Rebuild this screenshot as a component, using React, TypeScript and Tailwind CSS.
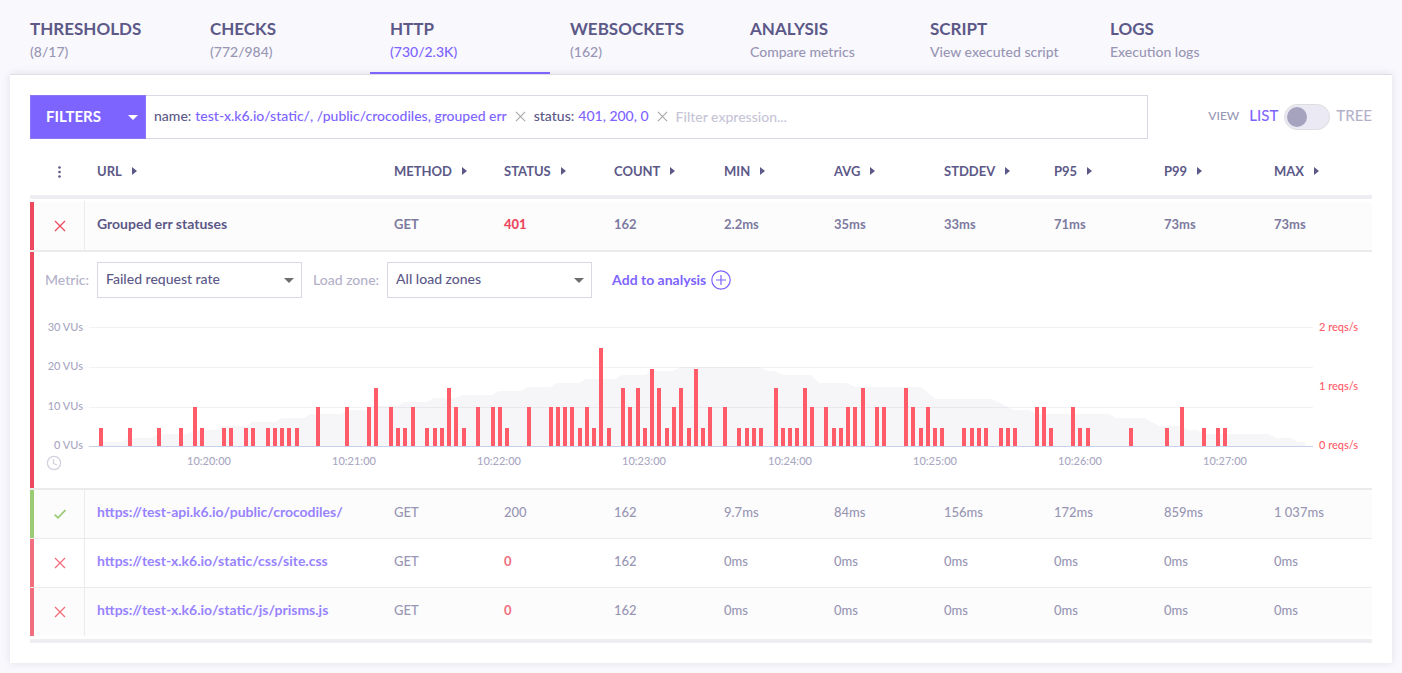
import { useState } from "react";

const TABS = [
  { title: "THRESHOLDS", sub: "(8/17)" },
  { title: "CHECKS", sub: "(772/984)" },
  { title: "HTTP", sub: "(730/2.3K)" },
  { title: "WEBSOCKETS", sub: "(162)" },
  { title: "ANALYSIS", sub: "Compare metrics" },
  { title: "SCRIPT", sub: "View executed script" },
  { title: "LOGS", sub: "Execution logs" },
];

const COLUMNS = ["METHOD", "STATUS", "COUNT", "MIN", "AVG", "STDDEV", "P95", "P99", "MAX"];

type Row = { url: string; ok: boolean; cells: string[] };

const GROUP: Row = {
  url: "Grouped err statuses",
  ok: false,
  cells: ["GET", "401", "162", "2.2ms", "35ms", "33ms", "71ms", "73ms", "73ms"],
};

const ROWS: Row[] = [
  {
    url: "https://test-api.k6.io/public/crocodiles/",
    ok: true,
    cells: ["GET", "200", "162", "9.7ms", "84ms", "156ms", "172ms", "859ms", "1 037ms"],
  },
  {
    url: "https://test-x.k6.io/static/css/site.css",
    ok: false,
    cells: ["GET", "0", "162", "0ms", "0ms", "0ms", "0ms", "0ms", "0ms"],
  },
  {
    url: "https://test-x.k6.io/static/js/prisms.js",
    ok: false,
    cells: ["GET", "0", "162", "0ms", "0ms", "0ms", "0ms", "0ms", "0ms"],
  },
];

// Request bars: [x, level]; the level indexes BAR_HEIGHTS.
const BAR_HEIGHTS = [0, 18, 39, 58, 77, 98];
const BARS: [number, number][] = [
  [65, 1], [94, 1], [123, 1], [145, 1], [159, 2], [166, 1], [188, 1], [195, 1], [210, 1], [217, 1],
  [232, 1], [239, 1], [246, 1], [253, 1], [261, 1], [282, 2], [311, 2], [333, 2], [340, 3], [355, 2],
  [362, 1], [369, 1], [377, 2], [391, 1], [399, 1], [406, 1], [413, 3], [420, 2], [428, 1], [442, 2],
  [457, 2], [464, 2], [471, 1], [493, 2], [515, 2], [522, 2], [529, 2], [536, 2], [544, 1], [551, 2],
  [558, 1], [565, 5], [573, 1], [587, 3], [594, 2], [602, 3], [609, 1], [616, 4], [623, 3], [631, 1],
  [638, 2], [645, 3], [653, 1], [660, 4], [667, 1], [674, 2], [689, 2], [703, 1], [711, 1], [718, 1],
  [725, 1], [740, 3], [747, 1], [754, 1], [761, 1], [769, 3], [776, 2], [790, 2], [798, 1], [805, 1],
  [812, 2], [819, 2], [827, 3], [841, 2], [848, 2], [870, 3], [877, 2], [885, 1], [892, 2], [899, 1],
  [906, 1], [928, 1], [936, 1], [943, 1], [950, 1], [965, 1], [972, 1], [979, 1], [1001, 2], [1008, 2],
  [1015, 1], [1037, 2], [1044, 1], [1052, 1], [1095, 1], [1131, 1], [1146, 2], [1168, 1], [1182, 1],
  [1189, 1],
];

// Active VUs over time.
const VUS =
  "61,136 67,132 88,132 95,128 117,128 124,124 153,124 160,120 183,120 189,116 212,116 218,112 241,112 248,108 270,108 277,104 307,104 314,100 334,100 341,96 363,96 370,92 392,92 400,88 422,88 429,85 458,85 465,81 487,81 494,77 516,77 523,73 545,73 552,69 581,69 588,65 611,65 618,61 639,61 647,57 726,57 734,61 741,61 749,65 777,65 785,73 813,73 821,77 887,77 901,89 958,89 980,100 995,100 1002,104 1075,104 1082,108 1111,108 1125,116 1147,116 1154,120 1163,120 1170,124 1235,124 1242,128 1257,128 1264,132 1271,132 1271,136";

const TIMES = ["10:20:00", "10:21:00", "10:22:00", "10:23:00", "10:24:00", "10:25:00", "10:26:00", "10:27:00"];

function Cross({ className }: { className: string }) {
  return (
    <svg viewBox="0 0 12 12" className={className} fill="none" stroke="currentColor" strokeWidth="1.3" aria-hidden="true">
      <path d="M1 1l10 10M11 1L1 11" />
    </svg>
  );
}

function Check() {
  return (
    <svg viewBox="0 0 12 12" className="h-3 w-3" fill="none" stroke="currentColor" strokeWidth="1.8" aria-hidden="true">
      <path d="M.7 6.6L4 9.8 11.4 2" />
    </svg>
  );
}

function SortArrow() {
  return (
    <svg viewBox="0 0 5 8" className="h-2 w-[5px]" fill="currentColor" aria-hidden="true">
      <path d="M0 0l5 4-5 4z" />
    </svg>
  );
}

function Caret({ className }: { className: string }) {
  return (
    <svg viewBox="0 0 10 5" className={className} fill="currentColor" aria-hidden="true">
      <path d="M0 0h10L5 5z" />
    </svg>
  );
}

function Dropdown({ id, label, value }: { id: string; label: string; value: string }) {
  return (
    <div className="flex items-center gap-2">
      <label htmlFor={id} className="text-sm font-medium text-[#b3b1c9]">
        {label}
      </label>
      <div className="relative">
        <select
          id={id}
          className="h-9 w-[205px] appearance-none border border-[#d9d8e5] bg-white pr-8 pb-0.5 pl-2 text-sm font-medium text-[#5c5988]"
        >
          <option>{value}</option>
        </select>
        <Caret className="pointer-events-none absolute top-4 right-2 h-[5px] w-[10px] text-[#6e6e6e]" />
      </div>
    </div>
  );
}

function FilterTag({ name, value }: { name: string; value: string }) {
  return (
    <span className="flex shrink-0 items-center">
      <span className="text-[#5c5988]">{name}:</span>
      <span className="ml-1 text-[#7d64ff]">{value}</span>
      <button type="button" aria-label={`Remove ${name} filter`} className="ml-2 text-[#a9a9a9]">
        <Cross className="h-[11px] w-[11px]" />
      </button>
    </span>
  );
}

function Chart() {
  return (
    <svg viewBox="0 0 1338 178" className="block w-full" role="img" aria-label="Failed request rate and virtual users">
      <g shapeRendering="crispEdges">
        {[17, 57, 97].map((y) => (
          <rect key={y} x="55" y={y} width="1224" height="1" fill="#f2f2f4" />
        ))}
      </g>
      <polygon points={VUS} fill="#5c5988" fillOpacity="0.055" />
      <g shapeRendering="crispEdges">
        <rect x="55" y="136" width="1224" height="1" fill="#c6d2ec" />
        {BARS.map(([x, level]) => (
          <rect key={x} x={x} y={136 - BAR_HEIGHTS[level]} width="4" height={BAR_HEIGHTS[level]} fill="#ff5b68" />
        ))}
      </g>
      <g fontSize="11" fontWeight="500" fill="#a9a7c2">
        <g textAnchor="end">
          <text x="49" y="21">30 VUs</text>
          <text x="49" y="60">20 VUs</text>
          <text x="49" y="100">10 VUs</text>
          <text x="49" y="139">0 VUs</text>
        </g>
        <g textAnchor="middle">
          {TIMES.map((t, i) => (
            <text key={t} x={175 + Math.round(i * 145.15)} y="155">
              {t}
            </text>
          ))}
        </g>
        <g fill="#ff5b68">
          <text x="1285" y="21">2 reqs/s</text>
          <text x="1285" y="80">1 reqs/s</text>
          <text x="1285" y="139">0 reqs/s</text>
        </g>
      </g>
      <g fill="none" stroke="#d2d1df" strokeWidth="1.3">
        <circle cx="20" cy="153" r="6.6" />
        <path d="M19.5 149v4.5l3.5 1.5" />
      </g>
    </svg>
  );
}

function DataRow({ row, group = false, last = false, striped = false }: {
  row: Row;
  group?: boolean;
  last?: boolean;
  striped?: boolean;
}) {
  const edge = group
    ? "h-[53px] border-t-[3px] border-t-white border-b-2 border-b-[#ebebeb]"
    : last
      ? "h-12"
      : "h-[49px] border-b border-b-[#ebebeb]";
  const bar = row.ok ? "bg-[#9bcb75]" : group ? "bg-[#eb4a5f]" : "bg-[#f06e7d]";
  const mark = row.ok ? "text-[#9bcb75]" : group ? "text-[#eb4a5f]" : "text-[#f06e7d]";
  return (
    <tr className={striped ? "bg-[#fcfcfc]" : "bg-white"}>
      <td className={`${edge} ${bar} p-0`} />
      <td className={`${edge} border-r border-r-[#ebebeb] p-0 pl-0.5`}>
        <span className={`flex justify-center ${mark}`}>{row.ok ? <Check /> : <Cross className="h-3 w-3" />}</span>
      </td>
      <td className={`${edge} truncate p-0 pb-1 pl-3 text-sm font-bold`}>
        {group ? (
          <span className="text-[#5c5988]">{row.url}</span>
        ) : (
          <a href={row.url} className="text-[#9883ff]">
            {row.url}
          </a>
        )}
      </td>
      {row.cells.map((c, i) => (
        <td
          key={COLUMNS[i]}
          className={`${edge} p-0 pb-1 pl-3 ${
            i === 1 && !row.ok
              ? group ? "font-black text-[#eb4a5f]" : "font-bold text-[#f06e7d]"
              : group ? "font-bold text-[#7d7aa0]" : "font-medium text-[#9896b4]"
          }`}
        >
          {c}
        </td>
      ))}
    </tr>
  );
}

export default function App() {
  const [active, setActive] = useState("HTTP");
  const [tree, setTree] = useState(false);
  return (
    <div className="min-h-screen bg-[#f9f8fd] px-[10px] pb-[10px] font-['Lato',sans-serif] text-[#5c5988]">
      <nav className="flex h-[74px]">
        {TABS.map((t) => (
          <button
            key={t.title}
            type="button"
            onClick={() => setActive(t.title)}
            className={`flex w-[180px] flex-col items-start border-b-2 px-5 pt-[17px] text-left ${
              active === t.title ? "border-[#7d64ff]" : "border-transparent"
            }`}
          >
            <span className="text-[17px] leading-6 font-bold">{t.title}</span>
            <span
              className={`mt-px text-sm leading-5 font-medium whitespace-nowrap ${
                active === t.title ? "text-[#7d64ff]" : "text-[#9896b4]"
              }`}
            >
              {t.sub}
            </span>
          </button>
        ))}
      </nav>

      <main className="border-t border-[#dddde6] bg-white p-5 shadow-[0_0_8px_rgba(60,60,100,0.12)]">
        <div className="flex items-center justify-between gap-[60px]">
          <div className="flex h-11 grow border border-[#d9d8e5]">
            <button
              type="button"
              className="-my-px -ml-px flex w-[116px] items-center justify-between border border-[#8b76f5] bg-[#7d64ff] pr-[7px] pl-[15px] text-[15px] font-bold text-white"
            >
              <span className="pb-0.5">FILTERS</span>
              <Caret className="h-[5px] w-[10px]" />
            </button>
            <div className="flex grow items-center gap-2 pb-0.5 pl-2 text-sm font-medium">
              <FilterTag name="name" value="test-x.k6.io/static/, /public/crocodiles, grouped err" />
              <FilterTag name="status" value="401, 200, 0" />
              <input
                aria-label="Filter expression"
                placeholder="Filter expression..."
                className="h-8 w-0 grow bg-transparent outline-none placeholder:text-[#c6c5d6]"
              />
            </div>
          </div>
          <div className="flex items-center text-[15px] font-medium">
            <span className="mr-[10px] pb-0.5 text-xs text-[#9896b4]">VIEW</span>
            <label htmlFor="tree" className="flex items-center gap-[6px]">
              <span className={`pb-1 ${tree ? "text-[#b3b1c9]" : "text-[#7d64ff]"}`}>LIST</span>
              <input
                id="tree"
                type="checkbox"
                role="switch"
                checked={tree}
                onChange={(e) => setTree(e.target.checked)}
                className="flex h-[26px] w-[46px] appearance-none items-center rounded-full border border-[#dededf] bg-[#ebe9f3] px-[2px] before:h-5 before:w-5 before:rounded-full before:bg-[#a5a3be] checked:justify-end"
              />
              <span className={`pb-1 ${tree ? "text-[#7d64ff]" : "text-[#b3b1c9]"}`}>TREE</span>
            </label>
          </div>
        </div>

        <div className="border-b-4 border-[#ededf2] pb-[3px]">
          <table className="w-full table-fixed border-separate border-spacing-0 text-left text-[13px] leading-5">
            <colgroup>
              <col className="w-1" />
              <col className="w-[51px]" />
              <col />
              {COLUMNS.map((c) => (
                <col key={c} className="w-[110px]" />
              ))}
            </colgroup>
            <thead>
              <tr>
                <th colSpan={2} className="h-[60px] border-b-4 border-[#ededf2] p-0 pl-[3px]">
                  <button type="button" aria-label="Table options" className="mx-auto mt-[10px] block">
                    <svg viewBox="0 0 3 12" className="h-3 w-[3px]" fill="currentColor" aria-hidden="true">
                      <circle cx="1.5" cy="1.5" r="1.3" />
                      <circle cx="1.5" cy="6" r="1.3" />
                      <circle cx="1.5" cy="10.5" r="1.3" />
                    </svg>
                  </button>
                </th>
                {["URL", ...COLUMNS].map((c) => (
                  <th key={c} className="border-b-4 border-[#ededf2] p-0 pl-3">
                    <button type="button" className="mt-2 flex items-center gap-[10px] font-bold">
                      {c}
                      <SortArrow />
                    </button>
                  </th>
                ))}
              </tr>
            </thead>
            <tbody>
              <DataRow row={GROUP} group striped />
              <tr>
                <td className="border-b-2 border-b-[#ebebeb] bg-[#eb4a5f] p-0" />
                <td colSpan={11} className="border-b-2 border-b-[#ebebeb] p-0 pt-[10px]">
                  <div className="mb-3 flex items-center gap-[11px] pl-[11px]">
                    <Dropdown id="metric" label="Metric:" value="Failed request rate" />
                    <Dropdown id="zone" label="Load zone:" value="All load zones" />
                    <button type="button" className="ml-[9px] flex items-center gap-[5px] text-sm font-bold text-[#7d64ff]">
                      Add to analysis
                      <svg viewBox="0 0 20 20" className="h-5 w-5" fill="none" stroke="currentColor" strokeWidth="1.2" aria-hidden="true">
                        <circle cx="10" cy="10" r="9.2" />
                        <path d="M10 5v10M5 10h10" />
                      </svg>
                    </button>
                  </div>
                  <Chart />
                </td>
              </tr>
              {ROWS.map((r, i) => (
                <DataRow key={r.url} row={r} striped={i % 2 === 0} last={i === ROWS.length - 1} />
              ))}
            </tbody>
          </table>
        </div>
      </main>
    </div>
  );
}
